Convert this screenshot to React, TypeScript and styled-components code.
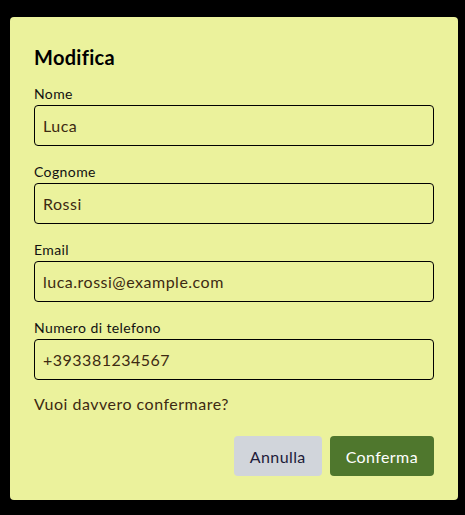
import React, { useState } from 'react';
import styled, { createGlobalStyle } from 'styled-components';

const GlobalStyle = createGlobalStyle`
  html, body {
    margin: 0;
    padding: 0;
    background: #000;
  }
  body {
    font-family: "Lato", "Noto Sans", sans-serif;
  }
`;

const Page = styled.div`
  width: 465px;
  height: 515px;
  padding: 17px 7px 15px 10px;
  box-sizing: border-box;
  background: #000;
`;

const Dialog = styled.form`
  width: 448px;
  height: 483px;
  box-sizing: border-box;
  padding: 24px 24px;
  background-color: #ebf29c;
  border-radius: 4px;
  display: flex;
  flex-direction: column;
`;

const Title = styled.h2`
  margin: 3px 0 15px;
  font-size: 20px;
  line-height: 26px;
  font-weight: 700;
  letter-spacing: 0.3px;
  color: #000;
`;

const Field = styled.div`
  display: flex;
  flex-direction: column;
  margin-bottom: 17px;
`;

const Label = styled.label`
  font-size: 14px;
  line-height: 18px;
  margin-bottom: 2px;
  letter-spacing: 0.4px;
  color: #111;
`;

const Input = styled.input`
  height: 41px;
  box-sizing: border-box;
  padding: 0 8px;
  border: 1px solid #000;
  border-radius: 4px;
  background: transparent;
  font-family: inherit;
  font-size: 16px;
  letter-spacing: 0.5px;
  color: #3d2a12;
  outline: none;
`;

const Question = styled.p`
  margin: -4px 0 0;
  font-size: 16px;
  line-height: 22px;
  letter-spacing: 0.5px;
  color: #3d2a12;
`;

const Actions = styled.div`
  display: flex;
  justify-content: flex-end;
  gap: 8px;
  margin-top: 21px;
`;

const Button = styled.button<{ $primary?: boolean }>`
  height: 40px;
  padding: 0 16px;
  border: none;
  border-radius: 4px;
  font-family: inherit;
  font-size: 16px;
  letter-spacing: 0.4px;
  cursor: pointer;
  background-color: ${(p) => (p.$primary ? '#4f772d' : '#d1d5db')};
  color: ${(p) => (p.$primary ? '#fff' : '#1e1b3a')};
`;

const App: React.FC = () => {
  const [form, setForm] = useState({
    nome: 'Luca',
    cognome: 'Rossi',
    email: 'luca.rossi@example.com',
    telefono: '+393381234567',
  });

  const fields: { key: keyof typeof form; label: string }[] = [
    { key: 'nome', label: 'Nome' },
    { key: 'cognome', label: 'Cognome' },
    { key: 'email', label: 'Email' },
    { key: 'telefono', label: 'Numero di telefono' },
  ];

  return (
    <>
      <GlobalStyle />
      <Page>
        <Dialog onSubmit={(e) => e.preventDefault()}>
          <Title>Modifica</Title>
          {fields.map((f) => (
            <Field key={f.key}>
              <Label htmlFor={f.key}>{f.label}</Label>
              <Input
                id={f.key}
                value={form[f.key]}
                onChange={(e) => setForm({ ...form, [f.key]: e.target.value })}
              />
            </Field>
          ))}
          <Question>Vuoi davvero confermare?</Question>
          <Actions>
            <Button type="button">Annulla</Button>
            <Button type="submit" $primary>
              Conferma
            </Button>
          </Actions>
        </Dialog>
      </Page>
    </>
  );
};

export default App;
